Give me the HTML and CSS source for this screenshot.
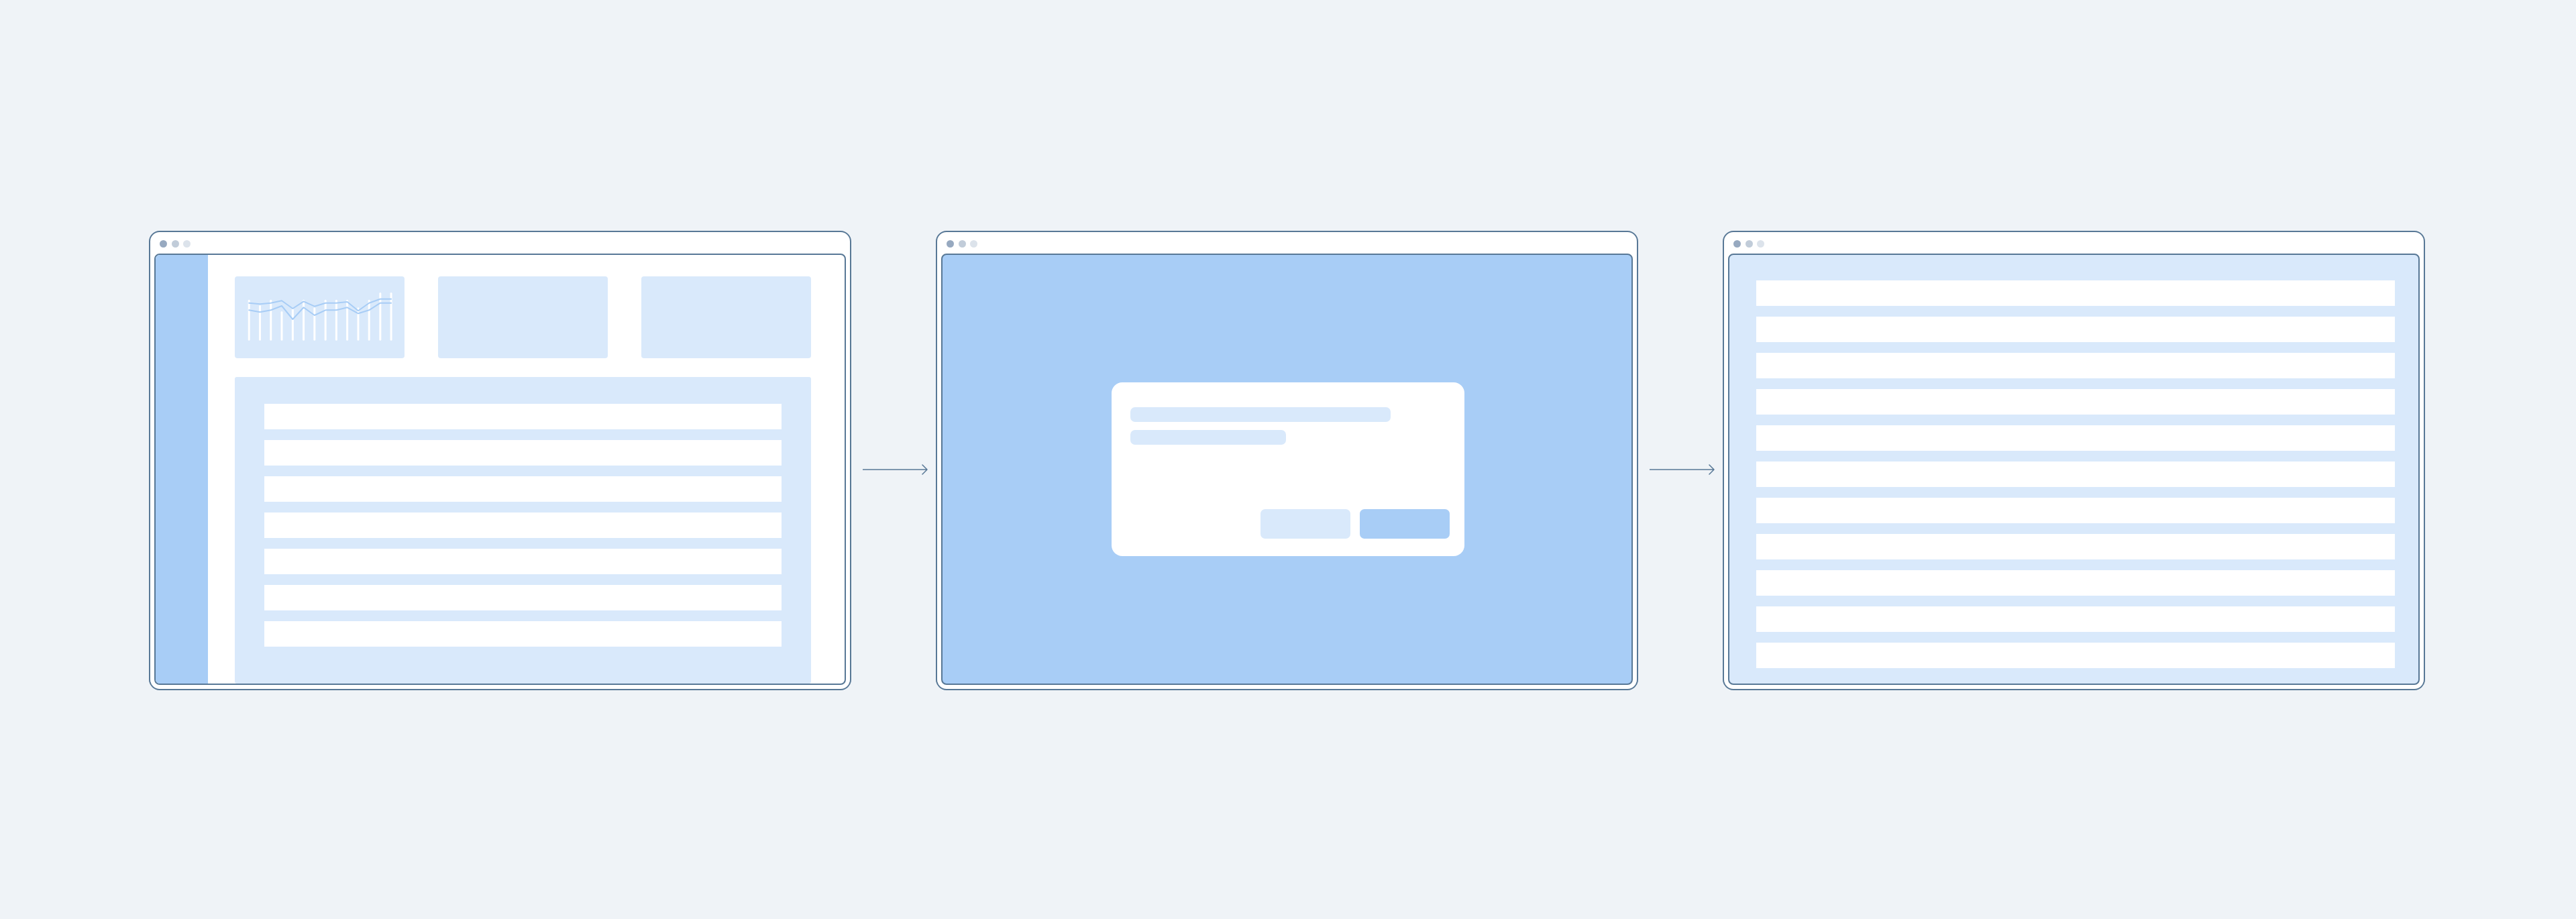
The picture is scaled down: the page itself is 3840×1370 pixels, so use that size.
FILE: index.html
```html
<!DOCTYPE html>
<html lang="en">
<head>
<meta charset="utf-8">
<title>Flow</title>
<link rel="stylesheet" href="styles.css">
</head>
<body>
<div class="stage">
  <div class="window">
    <div class="titlebar"><span class="dot d1"></span><span class="dot d2"></span><span class="dot d3"></span></div>
    <div class="frame dash">
      <div class="sidebar"></div>
      <div class="main">
        <div class="cards">
          <div class="card">
            <svg class="chart" viewBox="0 0 254 122" preserveAspectRatio="none">
              <g fill="#ffffff">
                <rect x="19.8" y="34.7" width="3" height="61" rx="1.5"/>
                <rect x="36.2" y="43" width="3" height="52.7" rx="1.5"/>
                <rect x="52.5" y="34.7" width="3" height="61" rx="1.5"/>
                <rect x="68.8" y="52" width="3" height="43.7" rx="1.5"/>
                <rect x="85.2" y="48" width="3" height="47.7" rx="1.5"/>
                <rect x="101.5" y="34.7" width="3" height="61" rx="1.5"/>
                <rect x="117.8" y="46.3" width="3" height="49.4" rx="1.5"/>
                <rect x="134.2" y="34.7" width="3" height="61" rx="1.5"/>
                <rect x="150.5" y="34.7" width="3" height="61" rx="1.5"/>
                <rect x="166.8" y="34.7" width="3" height="61" rx="1.5"/>
                <rect x="183.2" y="46.3" width="3" height="49.4" rx="1.5"/>
                <rect x="199.5" y="34.7" width="3" height="61" rx="1.5"/>
                <rect x="216.2" y="24" width="3" height="71.7" rx="1.5"/>
                <rect x="232.5" y="24" width="3" height="71.7" rx="1.5"/>
              </g>
              <g fill="none" stroke="#a8cdf6" stroke-width="2" stroke-linejoin="round" stroke-linecap="round">
                <polyline points="21.3,39.7 37.7,41.3 54,39.7 70.3,36.3 86.7,48 103,37.3 119.3,44.7 135.7,39.7 152,39.7 168.3,38 184.7,51.3 201,39.7 217.7,33.7 234,33.7"/>
                <polyline points="21.3,50.3 37.7,53.3 54,50.3 70.3,44 86.7,64 103,46.3 119.3,58 135.7,50.3 152,50.3 168.3,46.3 184.7,55.3 201,50.3 217.7,39.7 234,39.7"/>
              </g>
            </svg>
          </div>
          <div class="card"></div>
          <div class="card"></div>
        </div>
        <div class="panel">
          <div class="row"></div>
          <div class="row"></div>
          <div class="row"></div>
          <div class="row"></div>
          <div class="row"></div>
          <div class="row"></div>
          <div class="row"></div>
        </div>
      </div>
    </div>
  </div>

  <div class="arrow-col">
    <svg class="arrow" width="97" height="16" viewBox="0 0 97 16">
      <path d="M0 8 H96 M89 1 L96 8 L89 15" fill="none" stroke="#587896" stroke-width="1.5" stroke-linecap="round" stroke-linejoin="round"/>
    </svg>
  </div>

  <div class="window">
    <div class="titlebar"><span class="dot d1"></span><span class="dot d2"></span><span class="dot d3"></span></div>
    <div class="frame overlay">
      <div class="modal">
        <div class="line l1"></div>
        <div class="line l2"></div>
        <div class="actions">
          <div class="btn btn-secondary"></div>
          <div class="btn btn-primary"></div>
        </div>
      </div>
    </div>
  </div>

  <div class="arrow-col">
    <svg class="arrow" width="97" height="16" viewBox="0 0 97 16">
      <path d="M0 8 H96 M89 1 L96 8 L89 15" fill="none" stroke="#587896" stroke-width="1.5" stroke-linecap="round" stroke-linejoin="round"/>
    </svg>
  </div>

  <div class="window">
    <div class="titlebar"><span class="dot d1"></span><span class="dot d2"></span><span class="dot d3"></span></div>
    <div class="frame list">
      <div class="row"></div>
      <div class="row"></div>
      <div class="row"></div>
      <div class="row"></div>
      <div class="row"></div>
      <div class="row"></div>
      <div class="row"></div>
      <div class="row"></div>
      <div class="row"></div>
      <div class="row"></div>
      <div class="row"></div>
    </div>
  </div>
</div>
</body>
</html>
```

FILE: styles.css
```css
* { box-sizing: border-box; }

html, body {
  margin: 0;
  padding: 0;
  background: #eff3f7;
  font-family: "Liberation Sans", Arial, sans-serif;
}

.stage {
  display: flex;
  justify-content: flex-start;
  align-items: stretch;
  padding-top: 344px;
  padding-left: 222px;
}

.window {
  width: 1047px;
  height: 685px;
  flex: none;
  background: #ffffff;
  border: 2px solid #587896;
  border-radius: 16px;
  padding: 0 6px 6px;
  display: flex;
  flex-direction: column;
}

.titlebar {
  height: 32px;
  padding: 2px 0 0 8px;
  display: flex;
  align-items: center;
  gap: 6.6px;
}

.dot {
  width: 11px;
  height: 11px;
  border-radius: 50%;
}
.d1 { background: #97a9c0; }
.d2 { background: #c1ccd9; }
.d3 { background: #dce3eb; }

.frame {
  flex: 1;
  border: 2px solid #587896;
  border-radius: 8px;
  overflow: hidden;
}

/* window 1: dashboard */
.dash {
  display: flex;
  background: #ffffff;
}

.sidebar {
  width: 78px;
  background: #a8cdf6;
}

.main {
  flex: 1;
  padding: 32px 50px 0 40px;
  display: flex;
  flex-direction: column;
  gap: 28px;
}

.cards {
  display: grid;
  grid-template-columns: repeat(3, 1fr);
  gap: 50px;
  height: 122px;
}

.card {
  background: #d9e9fb;
  border-radius: 4px;
}

.chart {
  display: block;
  width: 100%;
  height: 100%;
}

.panel {
  flex: 1;
  background: #d9e9fb;
  border-radius: 3px;
  padding: 40px 44px 0;
  display: flex;
  flex-direction: column;
  gap: 16px;
}

.row {
  height: 38px;
  background: #ffffff;
  flex: none;
}

/* arrows */
.arrow-col {
  width: 126px;
  flex: none;
  display: flex;
  align-items: center;
  justify-content: center;
  padding: 36px 0 10px 4px;
}

.arrow { display: block; }

/* window 2: modal */
.overlay {
  background: #a8cdf6;
  display: flex;
  align-items: center;
  justify-content: center;
  padding-left: 3px;
}

.modal {
  width: 526px;
  height: 259px;
  background: #ffffff;
  border-radius: 16px;
  padding: 37px 22px 26px 28px;
  display: flex;
  flex-direction: column;
}

.line {
  height: 22px;
  background: #d9e9fb;
  border-radius: 7px;
}
.l1 { width: 388px; }
.l2 { width: 232px; margin-top: 12px; }

.actions {
  margin-top: auto;
  display: flex;
  justify-content: flex-end;
  gap: 14px;
}

.btn {
  width: 134px;
  height: 44px;
  border-radius: 7px;
}
.btn-secondary { background: #d9e9fb; }
.btn-primary { background: #a8cdf6; }

/* window 3: list */
.list {
  background: #d9e9fb;
  padding: 38px 35px 0 40px;
  display: flex;
  flex-direction: column;
  gap: 16px;
}
```
